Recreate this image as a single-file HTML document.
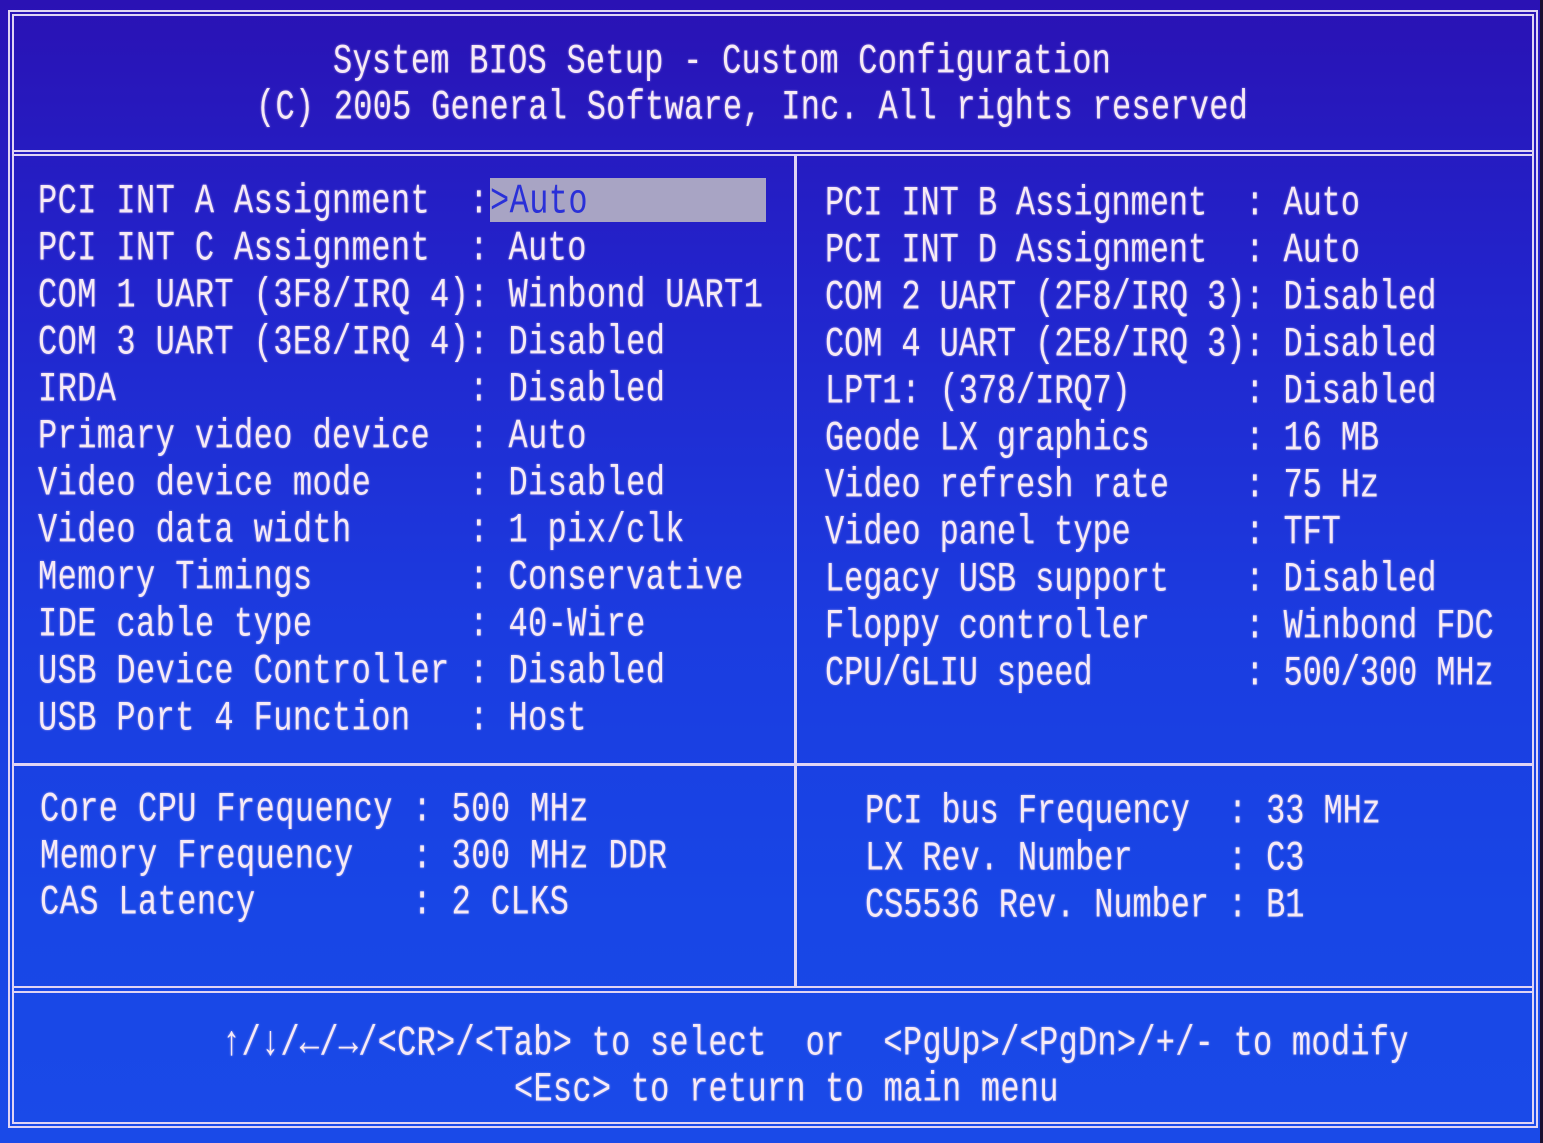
<!DOCTYPE html>
<html><head><meta charset="utf-8"><style>
body{margin:0;width:1543px;height:1143px;overflow:hidden;background:#1a1030;position:relative}
.bg{position:absolute;left:0;top:0;width:1540px;height:1143px;background:linear-gradient(180deg,#2a12b4 0%,#2224cc 25%,#1b3ce0 55%,#1846e6 80%,#1a4ae8 100%)}
.b{position:absolute;border:3px double #e0d4f4;box-sizing:border-box}
.l{position:absolute;height:3px;background:#e0d4f4}
.v{position:absolute;width:3px;background:#e0d4f4}
.t{position:absolute;font-family:"Liberation Mono",monospace;font-size:32px;letter-spacing:0.4px;color:#f6eaf6;white-space:pre;transform:scaleY(1.3);transform-origin:0 50%;line-height:40px;text-shadow:0 0 2px rgba(255,230,255,.6)}
.r{letter-spacing:-0.1px}
.h{letter-spacing:0.25px}
.hl{position:absolute;left:490px;top:178px;width:276px;height:44px;background:#a8a4c4}
.hlt{color:#2a30d8;text-shadow:none}
</style></head><body>
<div class="bg"></div>
<div class="b" style="left:8px;top:10px;width:1530px;height:1118px;border-width:6px"></div>
<div class="l" style="left:12px;top:150px;width:1522px;height:6px;border-top:2px solid #e0d4f4;border-bottom:2px solid #e0d4f4;background:transparent;box-sizing:border-box"></div>
<div class="l" style="left:14px;top:763px;width:1520px"></div>
<div class="l" style="left:12px;top:986px;width:1522px;height:7px;border-top:2px solid #e0d4f4;border-bottom:2px solid #e0d4f4;background:transparent;box-sizing:border-box"></div>
<div class="v" style="left:794px;top:155px;height:833px"></div>

<div class="t h" style="left:333px;top:42px">System BIOS Setup - Custom Configuration</div>
<div class="t h" style="left:256px;top:88px">(C) 2005 General Software, Inc. All rights reserved</div>

<div class="hl"></div>
<div class="t" style="left:38px;top:182px">PCI INT A Assignment  :</div>
<div class="t hlt" style="left:490px;top:182px">&gt;Auto</div>
<div class="t" style="left:38px;top:229px">PCI INT C Assignment  : Auto</div>
<div class="t" style="left:38px;top:276px">COM 1 UART (3F8/IRQ 4): Winbond UART1</div>
<div class="t" style="left:38px;top:323px">COM 3 UART (3E8/IRQ 4): Disabled</div>
<div class="t" style="left:38px;top:370px">IRDA                  : Disabled</div>
<div class="t" style="left:38px;top:417px">Primary video device  : Auto</div>
<div class="t" style="left:38px;top:464px">Video device mode     : Disabled</div>
<div class="t" style="left:38px;top:511px">Video data width      : 1 pix/clk</div>
<div class="t" style="left:38px;top:558px">Memory Timings        : Conservative</div>
<div class="t" style="left:38px;top:605px">IDE cable type        : 40-Wire</div>
<div class="t" style="left:38px;top:652px">USB Device Controller : Disabled</div>
<div class="t" style="left:38px;top:699px">USB Port 4 Function   : Host</div>

<div class="t r" style="left:825px;top:184px">PCI INT B Assignment  : Auto</div>
<div class="t r" style="left:825px;top:231px">PCI INT D Assignment  : Auto</div>
<div class="t r" style="left:825px;top:278px">COM 2 UART (2F8/IRQ 3): Disabled</div>
<div class="t r" style="left:825px;top:325px">COM 4 UART (2E8/IRQ 3): Disabled</div>
<div class="t r" style="left:825px;top:372px">LPT1: (378/IRQ7)      : Disabled</div>
<div class="t r" style="left:825px;top:419px">Geode LX graphics     : 16 MB</div>
<div class="t r" style="left:825px;top:466px">Video refresh rate    : 75 Hz</div>
<div class="t r" style="left:825px;top:513px">Video panel type      : TFT</div>
<div class="t r" style="left:825px;top:560px">Legacy USB support    : Disabled</div>
<div class="t r" style="left:825px;top:607px">Floppy controller     : Winbond FDC</div>
<div class="t r" style="left:825px;top:654px">CPU/GLIU speed        : 500/300 MHz</div>

<div class="t" style="left:40px;top:790px">Core CPU Frequency : 500 MHz</div>
<div class="t" style="left:40px;top:837px">Memory Frequency   : 300 MHz DDR</div>
<div class="t" style="left:40px;top:883px">CAS Latency        : 2 CLKS</div>

<div class="t r" style="left:865px;top:792px">PCI bus Frequency  : 33 MHz</div>
<div class="t r" style="left:865px;top:839px">LX Rev. Number     : C3</div>
<div class="t r" style="left:865px;top:886px">CS5536 Rev. Number : B1</div>

<div class="t h" style="left:222px;top:1024px">↑/↓/←/→/&lt;CR&gt;/&lt;Tab&gt; to select  or  &lt;PgUp&gt;/&lt;PgDn&gt;/+/- to modify</div>
<div class="t h" style="left:514px;top:1070px">&lt;Esc&gt; to return to main menu</div>
</body></html>
